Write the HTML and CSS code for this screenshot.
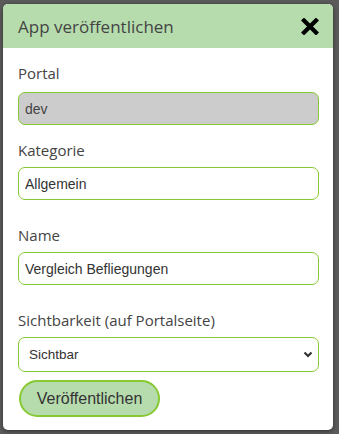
FILE: index.html
```html
<!DOCTYPE html>
<html lang="de">
<head>
<meta charset="utf-8">
<title>App veröffentlichen</title>
<link rel="stylesheet" href="styles.css">
</head>
<body>
<div class="dialog">
  <div class="header">
    <span class="title">App veröffentlichen</span>
    <svg class="close" width="18" height="17" viewBox="0 0 18 17">
      <path d="M3 2.5 L15 14.5 M15 2.5 L3 14.5" stroke="#000" stroke-width="4.2" stroke-linecap="square"/>
    </svg>
  </div>
  <div class="content">
    <div class="field first">
      <label class="label">Portal</label>
      <input class="input disabled" type="text" value="dev" disabled>
    </div>
    <div class="field wide">
      <label class="label">Kategorie</label>
      <input class="input" type="text" value="Allgemein">
    </div>
    <div class="field wide">
      <label class="label">Name</label>
      <input class="input" type="text" value="Vergleich Befliegungen">
    </div>
    <div class="field last">
      <label class="label">Sichtbarkeit (auf Portalseite)</label>
      <div class="select-wrap">
        <select class="select"><option>Sichtbar</option></select>
        <svg class="chevron" width="10" height="7" viewBox="0 0 10 7">
          <path d="M1.5 1.5 L5 5 L8.5 1.5" stroke="#333" stroke-width="2.2" fill="none"/>
        </svg>
      </div>
    </div>
    <button class="btn">Veröffentlichen</button>
  </div>
</div>
</body>
</html>
```
FILE: styles.css
```css
html, body {
  margin: 0;
  padding: 0;
}
body {
  background: #5b5b5b;
  width: 339px;
  height: 434px;
  overflow: hidden;
  padding-top: 4px;
  box-sizing: border-box;
}
.dialog {
  margin-left: 3px;
  width: 330px;
  height: 426px;
  background: #fff;
  border-radius: 5px;
  box-shadow: 0 1px 4px rgba(0,0,0,0.5);
  overflow: hidden;
  font-family: "Open Sans", "Noto Sans", sans-serif;
}
.header {
  height: 44px;
  background: #b6dcae;
  display: flex;
  align-items: center;
  justify-content: space-between;
  padding: 0 14px 0 15px;
}
.title {
  font-size: 17px;
  color: #444;
  padding-top: 1px;
}
.close {
  display: block;
  margin-top: 1px;
}
.content {
  padding: 15px 14px 0 15px;
  display: flex;
  flex-direction: column;
}
.field {
  display: flex;
  flex-direction: column;
  margin-bottom: 15px;
}
.field.wide {
  margin-bottom: 25px;
}
.field.last {
  margin-bottom: 0;
}
.label {
  font-size: 15px;
  line-height: 20px;
  color: #444;
  margin-bottom: 7px;
}
.field.first .label {
  margin-bottom: 9px;
}
.input {
  box-sizing: border-box;
  width: 100%;
  height: 33px;
  border: 1px solid #87c933;
  border-radius: 7px;
  padding: 0 6px;
  font-family: "Liberation Sans", Arial, sans-serif;
  font-size: 14px;
  color: #333;
  background: #fff;
  outline: none;
  margin: 0;
}
.input.disabled {
  background: #cccccc;
  color: #444;
}
.select-wrap {
  position: relative;
}
.select {
  -webkit-appearance: none;
  appearance: none;
  box-sizing: border-box;
  width: 100%;
  height: 35px;
  border: 1px solid #87c933;
  border-radius: 7px;
  padding: 0 10px;
  font-family: "Liberation Sans", Arial, sans-serif;
  font-size: 13.5px;
  color: #333;
  background: #fff;
  margin: 0;
}
.chevron {
  position: absolute;
  right: 6px;
  top: 14px;
  pointer-events: none;
}
.btn {
  align-self: flex-start;
  margin-top: 8px;
  margin-left: 1px;
  width: 141px;
  height: 37px;
  border: 2px solid #87c933;
  border-radius: 19px;
  background: #b6dcae;
  font-family: "Liberation Sans", Arial, sans-serif;
  font-size: 16px;
  color: #333;
  padding: 0;
}
```
